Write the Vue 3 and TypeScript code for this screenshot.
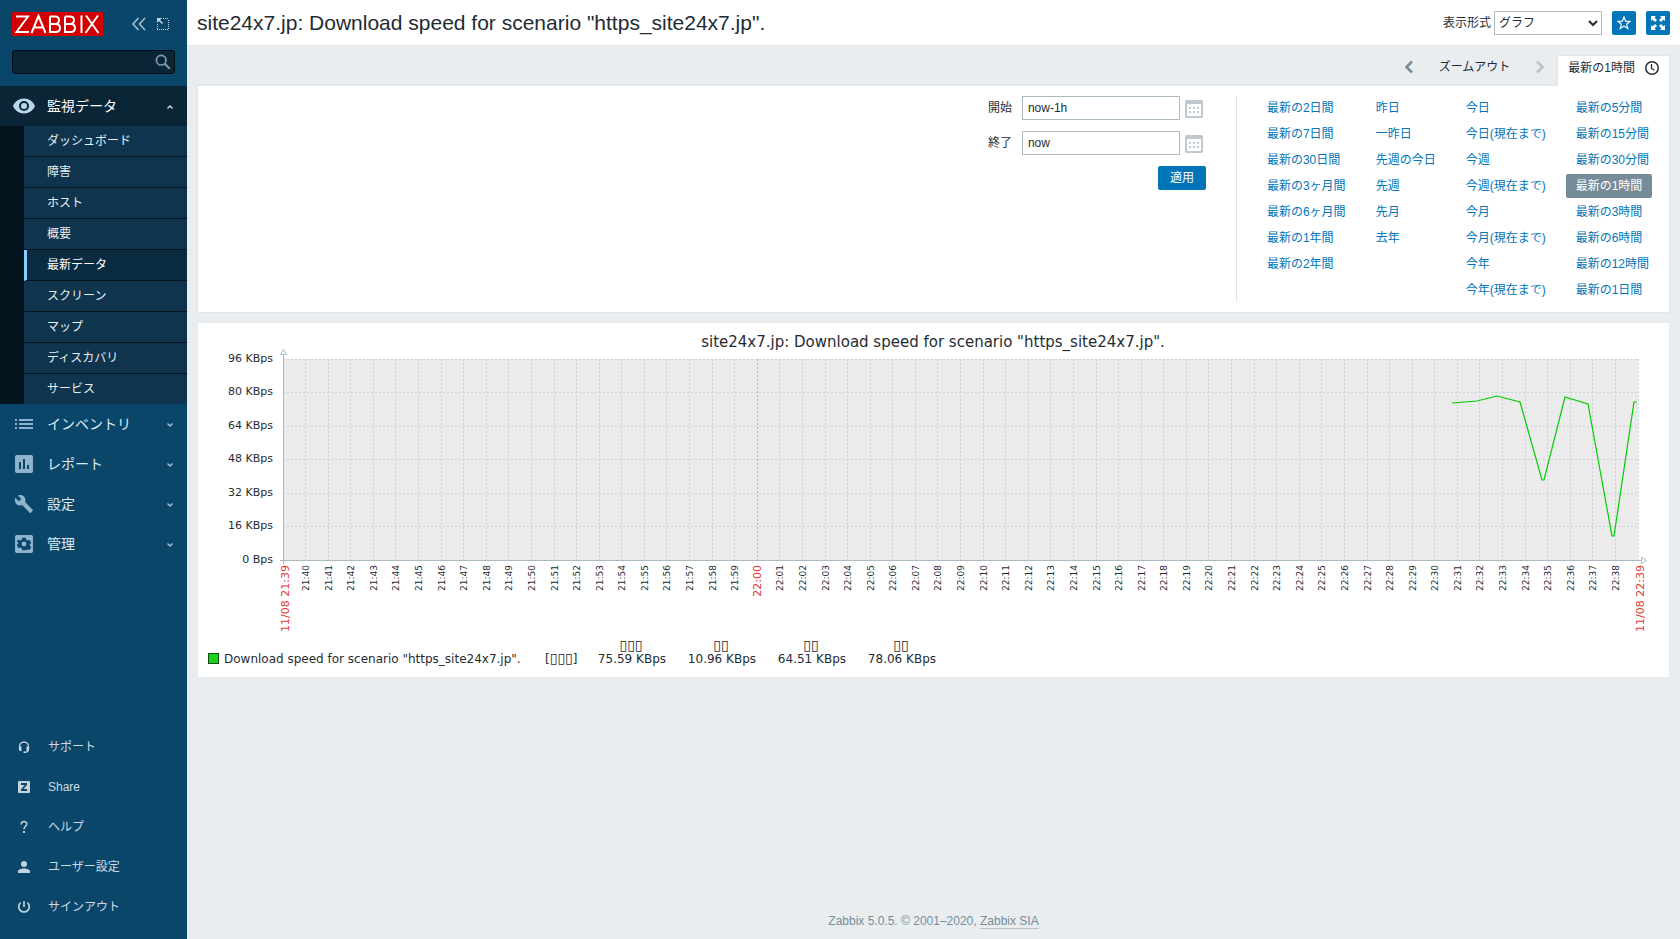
<script setup lang="ts">
import { ref } from 'vue'

const subItems = ['ダッシュボード', '障害', 'ホスト', '概要', '最新データ', 'スクリーン', 'マップ', 'ディスカバリ', 'サービス']
const mainItems = [
  { icon: 'list', label: 'インベントリ' },
  { icon: 'report', label: 'レポート' },
  { icon: 'wrench', label: '設定' },
  { icon: 'gear', label: '管理' },
]
const footItems = [
  { icon: 'support', label: 'サポート' },
  { icon: 'share', label: 'Share' },
  { icon: 'help', label: 'ヘルプ' },
  { icon: 'user', label: 'ユーザー設定' },
  { icon: 'power', label: 'サインアウト' },
]
const presets: string[][] = [
  ['最新の2日間', '最新の7日間', '最新の30日間', '最新の3ヶ月間', '最新の6ヶ月間', '最新の1年間', '最新の2年間'],
  ['昨日', '一昨日', '先週の今日', '先週', '先月', '去年'],
  ['今日', '今日(現在まで)', '今週', '今週(現在まで)', '今月', '今月(現在まで)', '今年', '今年(現在まで)'],
  ['最新の5分間', '最新の15分間', '最新の30分間', '最新の1時間', '最新の3時間', '最新の6時間', '最新の12時間', '最新の1日間'],
]
const selected = ref('最新の1時間')
const from = ref('now-1h')
const to = ref('now')
const search = ref('')
const view = ref('graph')

const plot = { left: 85, top: 36, right: 1440, bottom: 237 }
const yTicks = [96, 80, 64, 48, 32, 16, 0].map((v) => ({
  label: v === 0 ? '0 Bps' : `${v} KBps`,
  y: Math.floor(plot.bottom - (v / 96) * (plot.bottom - plot.top)),
}))
const step = (plot.right - plot.left) / 60
const xTicks = Array.from({ length: 61 }, (_, i) => {
  const m = 39 + i
  const time = `${21 + Math.floor(m / 60)}:${String(m % 60).padStart(2, '0')}`
  const edge = i === 0 || i === 60
  return { x: Math.floor(plot.left + step * i), label: edge ? `11/08 ${time}` : time, edge, hour: m === 60 }
})
const line = '1254,80 1279,78 1299,73 1322,79 1344,157 1346,157 1367,74 1390,81 1414,213 1416,213 1436,79 1439,79'
const stats = [
  { head: '▯▯▯', value: '75.59 KBps' },
  { head: '▯▯', value: '10.96 KBps' },
  { head: '▯▯', value: '64.51 KBps' },
  { head: '▯▯', value: '78.06 KBps' },
]
</script>

<template>
  <div class="page">
    <aside class="sidebar">
      <div class="brand">
        <a href="#" class="logo" aria-label="ZABBIX">
          <svg width="91" height="24" viewBox="0 0 91 24">
            <rect width="91" height="24" fill="#d40000" />
            <g fill="none" stroke="#fff" stroke-width="2">
              <path d="M4 4.500H16L4.500 20H17" />
              <path d="M19.500 21 26.500 4 33.500 21M22 15.500H31" />
              <path d="M38 4.500V20H43.500Q48 20 48 16T43.500 12H38M38 4.500H43Q47 4.500 47 8.200T43 12" />
              <path d="M53 4.500V20H58.500Q63 20 63 16T58.500 12H53M53 4.500H58Q62 4.500 62 8.200T58 12" />
              <path d="M69.500 3.500V21M74 3.500 86.500 21M86 3.500 73.500 21" />
            </g>
          </svg>
        </a>
        <div class="brand-tools">
          <button type="button" class="plain" aria-label="サイドバーを閉じる">
            <svg width="16" height="16" viewBox="0 0 16 16" fill="none" stroke="#a9c4d6" stroke-width="1.500"><path d="M7.500 2 2 8l5.500 6M14 2 8.500 8l5.500 6" /></svg>
          </button>
          <button type="button" class="plain" aria-label="サイドバーを隠す">
            <svg width="14" height="14" viewBox="0 0 14 14" fill="none" stroke="#c3d4df"><path d="M7 1.500h6M12.500 3v9M1.500 7v5M1 12.500h12" stroke-dasharray="1 1" /><path d="M1 1h5L1 6z" fill="#c3d4df" stroke="none" /><path d="m3 3 3.500 3.500" stroke-width="1.500" /></svg>
          </button>
        </div>
      </div>
      <form class="search" @submit.prevent>
        <input v-model="search" type="text" aria-label="検索" />
        <button type="submit" class="plain" aria-label="検索">
          <svg width="16" height="16" viewBox="0 0 16 16" fill="none" stroke="#7f9db1" stroke-width="1.700"><circle cx="6.200" cy="6.200" r="4.800" /><path d="m9.800 9.800 5 5" stroke-width="2" /></svg>
        </button>
      </form>
      <nav class="menu">
        <a href="#" class="main-item open">
          <svg class="ico" width="24" height="24" viewBox="0 0 24 24"><path fill="#b9d7ec" d="M12 4.500C7 4.500 2.700 7.600 1 12c1.700 4.400 6 7.500 11 7.500s9.300-3.100 11-7.500c-1.700-4.400-6-7.500-11-7.500zM12 17a5 5 0 1 1 0-10 5 5 0 0 1 0 10zm0-8a3 3 0 1 0 0 6 3 3 0 0 0 0-6z" /></svg>
          <span>監視データ</span>
          <svg class="chev" width="8" height="8" viewBox="0 0 8 8"><path d="m1.500 6.500 2.500-2.500 2.500 2.500" fill="none" stroke="#d8e4ec" stroke-width="1.300" /></svg>
        </a>
        <div class="sub">
          <a v-for="s in subItems" :key="s" href="#" :class="['sub-item', { active: s === '最新データ' }]">{{ s }}</a>
        </div>
        <a v-for="m in mainItems" :key="m.label" href="#" class="main-item">
          <svg class="ico" width="24" height="24" viewBox="0 0 24 24" fill="#8fb4cd">
            <path v-if="m.icon === 'list'" d="M3 7h2v2H3zM3 11h2v2H3zM3 15h2v2H3zM7 7h14v2H7zM7 11h14v2H7zM7 15h14v2H7z" />
            <path v-else-if="m.icon === 'report'" fill-rule="evenodd" d="M5 3h14a2 2 0 0 1 2 2v14a2 2 0 0 1-2 2H5a2 2 0 0 1-2-2V5c0-1.100.9-2 2-2zm2 7v7h2v-7zm4-3v10h2V7zm4 6v4h2v-4z" />
            <path v-else-if="m.icon === 'wrench'" d="m20.700 17.700-7.600-7.600c.8-1.900.3-4.200-1.200-5.700-1.700-1.600-4.100-1.900-6.100-1l3.500 3.500-2.400 2.400-3.600-3.500c-.9 2-.5 4.500 1.100 6.100 1.600 1.500 3.800 2 5.700 1.200l7.600 7.600c.3.300.9.300 1.200 0l1.800-1.900c.4-.3.400-.8 0-1.100z" />
            <g v-else>
              <rect x="3" y="3" width="18" height="18" rx="2" />
              <path fill="#0a466a" d="M10 5h4l.5 2.200 1.500.9 2.100-.8 2 3.500-1.600 1.500v1.500l1.600 1.400-2 3.500-2.100-.7-1.500.8L14 19h-4l-.5-2.200-1.500-.8-2.100.7-2-3.500 1.600-1.400v-1.500L3.900 8.800l2-1.500 2.100.8 1.500-.9z" transform="translate(1.200 1.200) scale(.9)" />
              <circle cx="12" cy="12" r="2.400" />
            </g>
          </svg>
          <span>{{ m.label }}</span>
          <svg class="chev" width="8" height="8" viewBox="0 0 8 8"><path d="m1.500 3.500 2.500 2.500 2.500-2.500" fill="none" stroke="#a9c4d6" stroke-width="1.300" /></svg>
        </a>
      </nav>
      <nav class="foot-menu">
        <a v-for="f in footItems" :key="f.label" href="#" class="foot-item">
          <svg class="ico" width="24" height="24" viewBox="0 0 24 24" fill="#c3d4df">
            <g v-if="f.icon === 'support'"><path d="M7.500 14v-2.500a4.500 4.500 0 0 1 9 0V14q0 3.300-4 3.300" fill="none" stroke="#c3d4df" stroke-width="1.300" /><path d="M7 11.500h2.500V16H8a1 1 0 0 1-1-1zM14.500 11.500H17V16h-2.500zM11.500 16.500h2V18h-2z" /></g>
            <path v-else-if="f.icon === 'share'" fill-rule="evenodd" d="M7 6h10a1 1 0 0 1 1 1v10a1 1 0 0 1-1 1H7a1 1 0 0 1-1-1V7a1 1 0 0 1 1-1zm2 2v2h3.700L9 14.500V16h6v-2h-3.500L15 9.700V8z" />
            <g v-else-if="f.icon === 'help'"><path d="M9.200 9.500c0-4 5.600-3.600 5.600-.5 0 2.200-2.800 2.400-2.800 5.200" fill="none" stroke="#c3d4df" stroke-width="1.500" /><path d="M11 16h2v2h-2z" /></g>
            <path v-else-if="f.icon === 'user'" d="M12 6a3 3 0 1 1 0 6 3 3 0 0 1 0-6zM6 18v-1.500C6 14.500 9 13.500 12 13.500s6 1 6 3V18z" />
            <path v-else d="M8.500 7.700a5.300 5.300 0 1 0 7 0M12 6v6" fill="none" stroke="#c3d4df" stroke-width="1.600" />
          </svg>
          <span>{{ f.label }}</span>
        </a>
      </nav>
    </aside>

    <div class="content">
      <header class="top">
        <h1>site24x7.jp: Download speed for scenario "https_site24x7.jp".</h1>
        <div class="tools">
          <label for="view">表示形式</label>
          <div class="select">
            <select id="view" v-model="view"><option value="graph">グラフ</option><option value="values">値</option></select>
            <svg width="10" height="7" viewBox="0 0 10 7"><path d="m1 1 4 4 4-4" fill="none" stroke="#1f2c33" stroke-width="2" /></svg>
          </div>
          <button type="button" class="square" aria-label="お気に入り">
            <svg width="14" height="14" viewBox="0 0 14 14" fill="none" stroke="#fff" stroke-width="1.200"><path d="m7 1 1.600 4.100 4.400.3-3.400 2.800 1.200 4.300L7 10.100l-3.800 2.400 1.200-4.300L1 5.400l4.400-.3z" /></svg>
          </button>
          <button type="button" class="square" aria-label="全画面">
            <svg width="14" height="14" viewBox="0 0 14 14" fill="#fff"><path d="M0 0h5L3.500 1.500 6 4 4 6 1.500 3.500 0 5zM14 0v5l-1.500-1.500L10 6 8 4l2.500-2.500L9 0zM0 14V9l1.500 1.500L4 8l2 2-2.500 2.500L5 14zM14 14H9l1.500-1.500L8 10l2-2 2.500 2.500L14 9z" /></svg>
          </button>
        </div>
      </header>

      <main>
        <div class="time-nav">
          <button type="button" class="plain arrow" aria-label="前へ"><svg width="10" height="14" viewBox="0 0 10 14"><path d="M8 1.500 2.500 7 8 12.500" fill="none" stroke="#768d99" stroke-width="2.500" /></svg></button>
          <button type="button" class="plain zoom">ズームアウト</button>
          <button type="button" class="plain arrow" disabled aria-label="次へ"><svg width="10" height="14" viewBox="0 0 10 14"><path d="M2 1.500 7.500 7 2 12.500" fill="none" stroke="#b8c4c9" stroke-width="2.500" /></svg></button>
          <a href="#" class="tab">最新の1時間<svg width="16" height="16" viewBox="0 0 16 16" fill="none" stroke="#1f2c33"><circle cx="8" cy="8" r="6.300" stroke-width="1.500" /><path d="M7.500 4v4.500l3 1.800" stroke-width="1.300" /></svg></a>
        </div>
        <section class="filter">
          <form class="range" @submit.prevent>
            <div v-for="f in ['from', 'to']" :key="f" class="row">
              <label :for="f">{{ f === 'from' ? '開始' : '終了' }}</label>
              <input v-if="f === 'from'" id="from" v-model="from" type="text" />
              <input v-else id="to" v-model="to" type="text" />
              <button type="button" class="plain cal" aria-label="カレンダー">
                <svg width="18" height="18" viewBox="0 0 18 18"><path fill="#c0c9cd" fill-rule="evenodd" d="M1 0h16l1 1v16l-1 1H1l-1-1V1zM2 4v12h14V4z" /><path fill="#c0c9cd" d="M4 7h2v2H4zM8 7h2v2H8zM12 7h2v2h-2zM4 11h2v2H4zM8 11h2v2H8zM12 11h2v2h-2z" /></svg>
              </button>
            </div>
            <button type="submit" class="apply">適用</button>
          </form>
          <div class="presets">
            <ul v-for="(col, i) in presets" :key="i">
              <li v-for="p in col" :key="p"><a href="#" :class="{ selected: p === selected }" @click.prevent="selected = p">{{ p }}</a></li>
            </ul>
          </div>
        </section>

        <section class="graph">
          <svg class="chart" viewBox="0 0 1471 354" role="img" aria-label="Download speed">
            <text class="title" x="735" y="24" text-anchor="middle">site24x7.jp: Download speed for scenario "https_site24x7.jp".</text>
            <rect :x="plot.left" :y="plot.top" :width="plot.right - plot.left" :height="plot.bottom - plot.top" fill="#ebebeb" />
            <g class="grid">
              <path v-for="t in yTicks.slice(0, 6)" :key="t.y" :d="`M${plot.left} ${t.y + 0.5}H${plot.right}`" />
              <path v-for="t in xTicks.slice(1)" :key="t.x" :class="{ hour: t.hour }" :d="`M${t.x + 0.5} ${plot.top}V${plot.bottom}`" />
            </g>
            <g class="axis">
              <path d="M85.500 31V241M82 237.500H1445" />
              <path d="m82.500 31.500 3-5 3 5zM1443.500 234.500l5 3-5 3z" fill="#fff" />
            </g>
            <polyline :points="line" fill="none" stroke="#00cc00" stroke-width="1.200" />
            <g class="ylab">
              <text v-for="t in yTicks" :key="t.y" x="75" :y="t.y + 3" text-anchor="end">{{ t.label }}</text>
            </g>
            <text v-for="t in xTicks" :key="t.x" :class="['xlab', { edge: t.edge || t.hour }]" text-anchor="end" :transform="`translate(${t.x + (t.edge ? 6 : 4)} 242) rotate(-90)`">{{ t.label }}</text>
            <g class="legend">
              <rect x="10.500" y="330.500" width="10" height="10" fill="#1ecf1e" stroke="#0a500a" />
              <text x="26" y="340">Download speed for scenario "https_site24x7.jp".</text>
              <text x="347" y="340">[<tspan class="box">▯▯▯</tspan>]</text>
              <template v-for="(s, i) in stats" :key="s.value">
                <text class="box" :x="433 + i * 90" y="327" text-anchor="middle">{{ s.head }}</text>
                <text :x="468 + i * 90" y="340" text-anchor="end">{{ s.value }}</text>
              </template>
            </g>
          </svg>
        </section>
      </main>
      <footer>Zabbix 5.0.5. © 2001–2020, <a href="#">Zabbix SIA</a></footer>
    </div>
  </div>
</template>

<style>
body { margin: 0; background: #e9edf0; }
</style>

<style scoped>
* { box-sizing: border-box; }
.page { display: flex; min-height: 100vh; background: #e9edf0; color: #1f2c33; font: 12px/16px "Liberation Sans", "Noto Sans CJK JP", sans-serif; }
a { color: #0275b8; text-decoration: none; }
button, input, select { font: inherit; color: inherit; }
button { cursor: pointer; }
.plain { padding: 0; border: 0; background: none; display: flex; align-items: center; }
.sidebar { width: 187px; flex: none; display: flex; flex-direction: column; background: #0a466a; }
.brand { display: flex; justify-content: space-between; align-items: center; padding: 12px 17px 0 12px; }
.logo, .logo svg { display: block; }
.brand-tools { display: flex; gap: 9px; }
.search { display: flex; align-items: center; height: 24px; margin: 14px 12px 12px; padding-right: 3px; background: #0a2536; border: 1px solid #020c13; border-radius: 3px; }
.search input { flex: 1; min-width: 0; height: 22px; border: 0; background: none; color: #fff; outline: 0; }
.main-item { display: flex; align-items: center; height: 40px; padding: 0 13px 0 12px; gap: 11px; font-size: 14px; color: #dfe9f0; }
.main-item .chev { margin-left: auto; }
.open { background: #0a2536; color: #fff; }
.sub { padding-left: 24px; background: #04141e; }
.sub-item { display: flex; align-items: center; height: 31px; padding-left: 23px; font-size: 12px; color: #e8f0f5; background: #0f344d; border-bottom: 1px solid #04141e; }
.sub-item:last-child { height: 30px; border-bottom: 0; }
.sub-item.active { background: #0a2b40; color: #fff; border-left: 3px solid #86cfff; padding-left: 20px; }
.foot-menu { margin-top: auto; padding-bottom: 12px; }
.foot-item { display: flex; align-items: center; gap: 12px; height: 40px; padding-left: 12px; color: #ccdbe5; }
.content { flex: 1; min-width: 0; display: flex; flex-direction: column; }
.top { display: flex; justify-content: space-between; align-items: center; height: 46px; padding: 0 10px; background: #fff; border-bottom: 1px solid #dfe4e7; }
h1 { margin: 0; font-size: 21px; line-height: 24px; font-weight: 400; }
.tools { display: flex; align-items: center; gap: 10px; }
.tools label { margin-right: -7px; }
.select { position: relative; width: 108px; }
.select select { width: 100%; height: 24px; padding: 0 4px; border: 1px solid #acbbc2; border-radius: 0; background: #fff; appearance: none; }
.select svg { position: absolute; right: 4px; top: 9px; pointer-events: none; }
.square { display: flex; align-items: center; justify-content: center; width: 24px; height: 24px; padding: 0; border: 0; border-radius: 2px; background: #0275b8; }
main { padding: 9px 10px 0; }
.time-nav { display: flex; justify-content: flex-end; align-items: flex-start; height: 30px; }
.arrow { justify-content: center; width: 24px; height: 24px; }
.zoom { height: 24px; margin: 0 18px; }
.tab { position: relative; display: flex; align-items: center; gap: 9px; height: 31px; margin-left: 5px; padding: 0 9px 6px 10px; border: 1px solid #dfe4e7; border-bottom: 0; background: #fff; color: #1f2c33; }
.filter { display: flex; justify-content: flex-end; background: #fff; border: 1px solid #dfe4e7; padding: 10px; }
.range { display: flex; flex-direction: column; gap: 11px; padding-right: 30px; border-right: 1px solid #dfe4e7; }
.row { display: flex; align-items: center; }
.row label { margin-right: 10px; }
.row input { width: 158px; height: 24px; padding: 0 5px; border: 1px solid #acbbc2; }
.cal { margin: 2px 3px 0 5px; height: 18px; }
.apply { align-self: flex-end; width: 48px; height: 24px; padding: 0; border: 0; border-radius: 2px; background: #0275b8; color: #fff; }
.presets { display: flex; gap: 10px; padding-left: 20px; }
ul { margin: 0; padding: 0; list-style: none; }
li { height: 26px; }
li:last-child { height: 24px; }
li a { display: inline-block; padding: 4px 10px; white-space: nowrap; border-radius: 2px; }
li a.selected { background: #768d99; color: #fff; }
.graph { margin-top: 9px; border: 1px solid #e9edf0; background: #fff; }
.chart { display: block; width: 100%; height: auto; font-family: "DejaVu Sans", sans-serif; fill: #1f2c33; }
.title { font-size: 15px; }
.grid path { stroke: #c8d3d9; stroke-dasharray: 2 2; shape-rendering: crispEdges; }
.grid path.hour { stroke: #acb5b9; }
.axis path { stroke: #acbbc2; }
.ylab { font-size: 11px; }
.xlab { font-size: 9px; }
.xlab.edge { font-size: 11px; fill: #e33734; }
.legend { font-size: 12px; }
.box { font-size: 14px; }
footer { margin-top: auto; padding-bottom: 10px; text-align: center; color: #768d99; }
footer a { color: #768d99; border-bottom: 1px solid #b5c2c8; }
</style>
